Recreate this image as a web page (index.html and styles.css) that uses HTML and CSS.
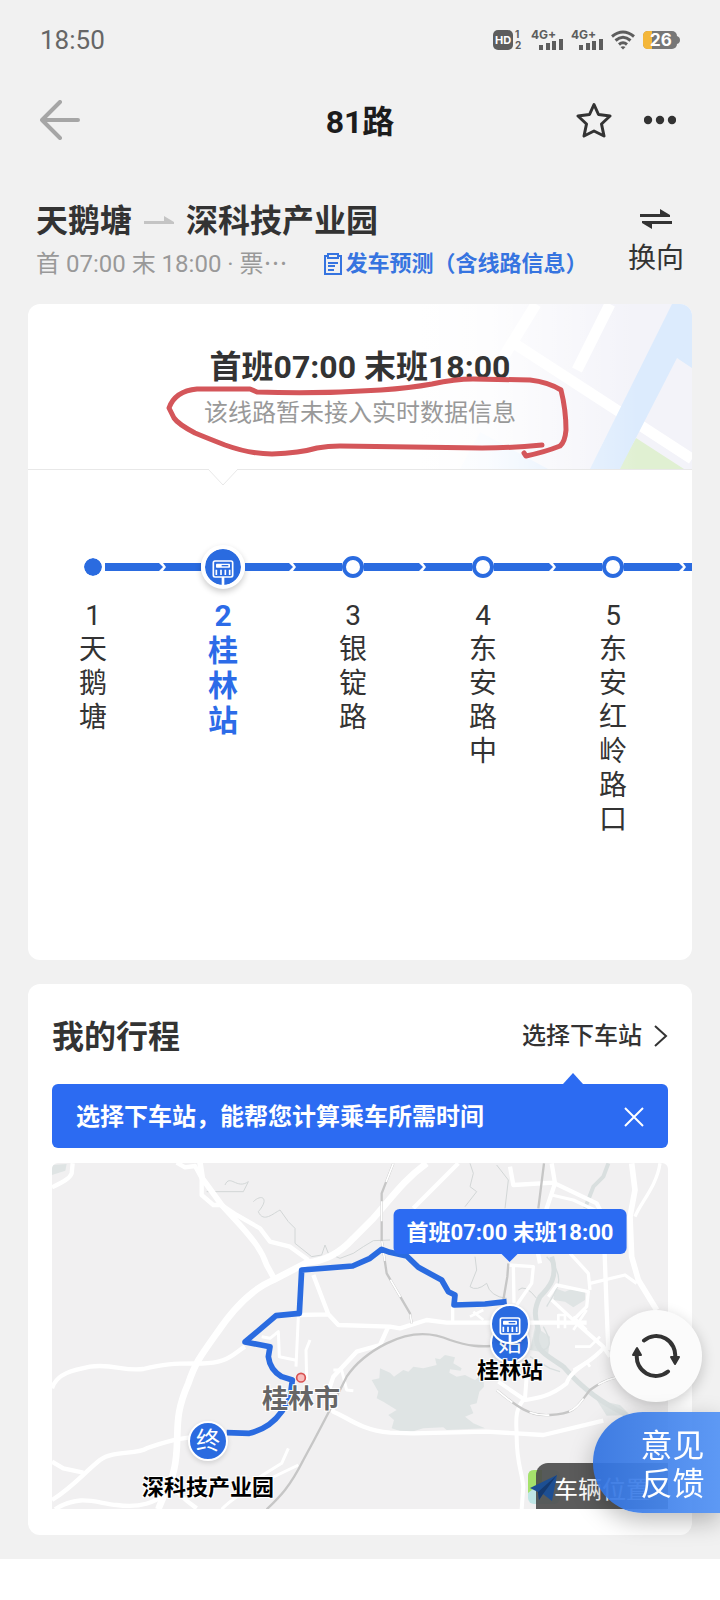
FILE: index.html
```html
<!DOCTYPE html>
<html lang="zh-CN">
<head>
  <meta charset="UTF-8">
  <meta name="viewport" content="width=device-width,initial-scale=1.0">
  <title>81路</title>
  <link rel="stylesheet" href="styles.css">
</head>
<body>
  <svg class="sprite" aria-hidden="true">
    <symbol id="stop-sign" viewBox="0 0 108 108">
      <rect x="25" y="36" width="58" height="48" rx="5" fill="none" stroke="#fff" stroke-width="5"/>
      <rect x="33" y="44" width="42" height="12" rx="2" fill="#fff"/>
      <path d="M50 50h20" stroke="#2a6be0" stroke-width="4"/>
      <path d="M34 62v16M48 62v16M61 62v16M74 62v16" stroke="#fff" stroke-width="5"/>
      <path d="M54 84v24" stroke="#fff" stroke-width="8"/>
    </symbol>
    <symbol id="chevron" viewBox="0 0 10 8">
      <path d="M0 0h1l4 4-4 4H0z" fill="#2a6be0"/>
      <path d="M10 0H5l3 4-3 4h5z" fill="#2a6be0"/>
    </symbol>
  </svg>

  <div class="app">
    <div class="status">
      <span class="time">18:50</span>
      <div class="status-icons">
        <svg width="30" height="24" viewBox="0 0 30 24">
          <rect x="0" y="2" width="20" height="20" rx="5" fill="#5d5d5d"/>
          <text x="2" y="16" font-size="11" font-weight="700" fill="#fff">HD</text>
          <text x="22" y="10" font-size="10" font-weight="700" fill="#5d5d5d">1</text>
          <text x="22" y="21" font-size="10" font-weight="700" fill="#5d5d5d">2</text>
        </svg>
        <svg width="32" height="24" viewBox="0 0 32 24">
          <text x="0" y="11" font-size="12" font-weight="700" fill="#5d5d5d">4G+</text>
          <path d="M10 22v-5M17 22v-7M23 22v-9M30 22v-11" stroke="#5d5d5d" stroke-width="4"/>
        </svg>
        <svg width="32" height="24" viewBox="0 0 32 24">
          <text x="0" y="11" font-size="12" font-weight="700" fill="#5d5d5d">4G+</text>
          <path d="M10 22v-5M17 22v-7M23 22v-9M30 22v-11" stroke="#5d5d5d" stroke-width="4"/>
        </svg>
        <svg width="24" height="20" viewBox="0 0 24 20" fill="none" stroke="#5d5d5d" stroke-width="3">
          <path d="M1 6.500Q12-2.500 23 6.500M4.500 10.500Q12 4 19.500 10.500M8 14.500Q12 11 16 14.500"/>
          <path d="M9.500 17Q12 15.500 14.500 17L12 19.500z" fill="#5d5d5d" stroke="none"/>
        </svg>
        <svg width="37" height="20" viewBox="0 0 37 20">
          <rect x="0" y="1" width="34" height="18" rx="5" fill="#777"/>
          <path d="M9 1H5Q0 1 0 6v8q0 5 5 5h4z" fill="#f4b73a"/>
          <path d="M34 6q3 1 3 4t-3 4z" fill="#777"/>
          <text x="7" y="16" font-size="17" font-weight="700" fill="#fff">26</text>
        </svg>
      </div>
    </div>

    <header class="nav">
      <button class="icon-btn" aria-label="返回">
        <svg width="40" height="40" viewBox="0 0 40 40" fill="none" stroke="#a6a6a6" stroke-width="4" stroke-linecap="round" stroke-linejoin="round">
          <path d="M20 2L2 20l18 18M2 20h36"/>
        </svg>
      </button>
      <h1>81路</h1>
      <div class="nav-actions">
        <button class="icon-btn" aria-label="收藏">
          <svg width="36" height="36" viewBox="0 0 36 36" fill="none" stroke="#333" stroke-width="3" stroke-linejoin="round">
            <path d="M18 2.500L22.500 12.500 34 14l-8.500 8L28 34 18 29 8 34l2.500-12L2 14l11.500-1.500z"/>
          </svg>
        </button>
        <button class="icon-btn" aria-label="更多">
          <svg width="32" height="36" viewBox="0 0 32 36" fill="#333">
            <circle cx="4" cy="18" r="4.200"/><circle cx="16" cy="18" r="4.200"/><circle cx="28" cy="18" r="4.200"/>
          </svg>
        </button>
      </div>
    </header>

    <section class="route">
      <div class="route-info">
        <h2>
          天鹅塘
          <svg width="30" height="10" viewBox="0 0 30 10"><path d="M0 5h20V0l10 6v2H0z" fill="#c4c4c4"/></svg>
          深科技产业园
        </h2>
        <div class="route-meta">
          <span>首 07:00 末 18:00 · 票⋯</span>
          <a href="#">
            <svg width="18" height="22" viewBox="0 0 18 22" fill="none" stroke="#3674e0" stroke-width="2">
              <path d="M4 3H1v18h16V3h-3M4 1h10v4H4zM4 10h10M4 13h7M4 17h6"/>
            </svg>发车预测（含线路信息）</a>
        </div>
      </div>
      <button class="swap">
        <svg width="32" height="20" viewBox="0 0 32 20" fill="#333">
          <path d="M0 5h20V0l10 6v2H0zM32 12H2v2l10 6v-5h20z"/>
        </svg>
        换向
      </button>
    </section>

    <section class="card line-card">
      <div class="banner">
        <svg class="banner-map" width="272" height="165" viewBox="0 0 272 165">
          <defs>
            <linearGradient id="fade">
              <stop offset="0" stop-color="#fff"/>
              <stop offset="0.250" stop-color="#fff" stop-opacity="0.850"/>
              <stop offset="0.800" stop-color="#fff" stop-opacity="0"/>
            </linearGradient>
          </defs>
          <rect width="272" height="165" fill="#f3f3f9"/>
          <path d="M60 128L128 165H40z" fill="#dcebfd"/>
          <path d="M116 0L84 52M190 0L157 66M95 40L272 155" stroke="#fff" stroke-width="11"/>
          <path d="M216 134L264 165H198z" fill="#e0f0d2"/>
          <path d="M252 0h20v64l-15-10-57 111h-30z" fill="#dcebfd"/>
          <path d="M272 33l-4-2-8 20 12 9z" fill="#dcebfd"/>
          <rect width="272" height="165" fill="url(#fade)"/>
        </svg>
        <div class="banner-text">
          <h3>首班07:00 末班18:00</h3>
          <p>该线路暂未接入实时数据信息</p>
          <svg class="scribble" width="420" height="100" viewBox="150 370 420 100" fill="none" stroke="#d4565a" stroke-width="5" stroke-linecap="round" stroke-linejoin="round">
            <path d="M542 445Q510 448 482 448L340 446Q328 446 317 448Q300 453 272 454Q250 454 225 445Q207 438 195 433Q178 424 174 418L169 408Q175 391 197 389L250 389L257 392Q321 394 381 390Q410 388 432 384Q455 379 473 379L530 380Q548 382 561 390Q566 410 566 430Q565 442 560 446Q545 452 526 456L524 453"/>
          </svg>
        </div>
        <svg class="notch" width="30" height="17" viewBox="0 0 30 17">
          <path d="M0 0L15 16 30 0" fill="#fff" stroke="#e8e8e8"/>
        </svg>
      </div>

      <ol class="stations">
        <li class="station first">
          <div class="track"><i></i><span class="node"></span><i class="line"></i></div>
          <span class="num">1</span>
          <span class="name">天鹅塘</span>
        </li>
        <li class="station active">
          <div class="track"><i class="line arrow"><svg width="10" height="8"><use href="#chevron"/></svg></i><span class="node"><svg width="36" height="36"><use href="#stop-sign"/></svg></span><i class="line"></i></div>
          <span class="num">2</span>
          <span class="name">桂林站</span>
        </li>
        <li class="station">
          <div class="track"><i class="line arrow"><svg width="10" height="8"><use href="#chevron"/></svg></i><span class="node"></span><i class="line"></i></div>
          <span class="num">3</span>
          <span class="name">银锭路</span>
        </li>
        <li class="station">
          <div class="track"><i class="line arrow"><svg width="10" height="8"><use href="#chevron"/></svg></i><span class="node"></span><i class="line"></i></div>
          <span class="num">4</span>
          <span class="name">东安路中</span>
        </li>
        <li class="station">
          <div class="track"><i class="line arrow"><svg width="10" height="8"><use href="#chevron"/></svg></i><span class="node"></span><i class="line"></i></div>
          <span class="num">5</span>
          <span class="name">东安红岭路口</span>
        </li>
        <li class="station" aria-hidden="true">
          <div class="track"><i class="line arrow"><svg width="10" height="8"><use href="#chevron"/></svg></i><span class="node"></span><i class="line"></i></div>
        </li>
      </ol>
    </section>

    <section class="card trip-card">
      <div class="trip-head">
        <h2>我的行程</h2>
        <a href="#">选择下车站
          <svg width="14" height="22" viewBox="0 0 14 22" fill="none" stroke="#333" stroke-width="2"><path d="M1 1l11 10L1 21"/></svg>
        </a>
      </div>
      <div class="tip">
        <span>选择下车站，能帮您计算乘车所需时间</span>
        <button class="icon-btn" aria-label="关闭">
          <svg width="20" height="20" viewBox="0 0 20 20" stroke="#fff" stroke-width="2"><path d="M1 1l18 18M19 1L1 19"/></svg>
        </button>
      </div>

      <div class="map">
        <svg class="map-bg" viewBox="36 39 1848 1038" preserveAspectRatio="xMidYMid slice" fill="none" stroke-linejoin="round">
          <!-- water -->
          <g fill="#dfe4e4">
            <path d="M995 690L1018 685 1020 655 1050 668 1062 680 1090 660 1105 665 1120 650 1150 655 1190 645 1185 625 1200 628 1215 615 1245 622 1240 640 1265 655 1262 662 1230 658 1228 668 1250 680 1275 675 1305 690 1330 670 1332 710 1318 725 1310 760 1290 765 1300 790 1275 800 1300 820 1335 835 1220 840 1210 832 1150 835 1100 850 1055 835 1062 810 1045 795 1070 780 1030 755 1010 745 1015 725z"/>
            <path d="M1545 415L1575 425 1600 415 1635 425V450L1600 472 1575 455 1540 450z"/>
            <path d="M1485 530L1530 560 1525 610 1470 600z"/>
            <path d="M1670 750L1740 765 1770 795 1700 797z"/>
            <path d="M36 45L80 42 76 62 36 75z"/>
          </g>
          <g stroke="#d9dfdf">
            <path d="M1705 40L1690 80 1660 110 1635 175" stroke-width="12"/>
            <path d="M1535 320C1555 380 1530 410 1500 440C1475 490 1490 510 1495 540C1470 600 1530 620 1570 650C1630 720 1690 760 1760 795" stroke-width="15"/>
            <path d="M1520 320C1590 390 1540 430 1520 470M1510 530Q1550 600 1500 600M1470 620L1530 655 1560 665" stroke-width="4"/>
          </g>
          <g stroke="#d2d6d6" stroke-width="3">
            <path d="M555 105C570 70 590 120 625 95L610 125 555 125 500 125M640 155C665 130 690 145 655 185C670 220 700 190 720 180L745 215 765 235 765 280 815 320 845 315 855 285 865 310 900 325 940 310 970 290 1000 272 1050 270"/>
            <path d="M1290 40L1300 70 1290 110 1310 125 1275 170M1370 45L1405 90 1395 175M1305 320L1310 360 1290 410Q1310 425 1340 400Q1350 440 1400 445M1435 420Q1455 400 1490 445"/>
          </g>

          <!-- roads -->
          <g stroke="#fff" stroke-width="20">
            <path d="M1160 40C1090 90 1050 150 1000 205L940 265Q880 332 800 338L700 390C630 420 570 490 530 550C480 620 465 640 445 700C405 790 415 830 410 900C405 990 380 1010 355 1078"/>
            <path d="M480 38L487 85 545 165 600 225C640 270 665 300 680 345L705 390M1775 40L1785 120 1770 200 1775 320 1795 390 1850 480" stroke-width="17"/>
          </g>
          <g stroke="#fff" stroke-width="13">
            <path d="M36 112C70 95 90 85 95 70L98 40M410 38L435 52 465 48 485 85V135L520 165H545L590 195 660 235 690 275 750 290 805 330"/>
            <path d="M36 715C50 670 100 660 150 650C220 640 250 665 310 657C370 642 400 640 470 640C560 645 580 610 615 590"/>
            <path d="M36 1050C100 1010 130 970 180 930C220 900 290 915 320 895Q360 880 410 868L450 862M36 935L70 955 130 968M45 1078C120 1030 170 1060 230 1065C300 1075 340 1060 400 1020M400 1010Q420 1040 470 1075"/>
            <path d="M545 1078C590 1030 640 1020 660 980L725 940 745 895M640 1010L775 945" stroke-width="9"/>
            <path d="M780 495L865 493 820 375M865 493L895 525 1050 530 1080 535 1160 510 1220 518H1640M1045 530L1020 585 950 605 880 680 860 740 880 785C920 800 960 840 1050 848L1120 850 1340 845 1510 855 1690 812"/>
            <path d="M775 500L768 650M665 560L690 565 715 545 718 620 765 630M810 570L798 600 800 690M880 660L905 660 920 720 940 722" stroke-width="9"/>
            <path d="M1255 40L1120 175M1410 50L1420 105 1540 98 1670 160 1690 200 1700 480 1705 600M1535 40L1545 100 1520 175 1490 290 1500 340"/>
            <path d="M1860 40C1850 110 1800 160 1785 200M1535 135L1600 150 1675 185M1405 345L1480 350 1475 400 1430 465M1420 345L1422 460M1525 440L1550 405 1645 425 1640 470 1600 510 1535 450M1590 310L1645 370 1650 420M1650 400L1755 375 1790 400M1238 470V515" stroke-width="10"/>
            <path d="M1610 520L1690 590 1710 620M1690 595C1650 640 1590 660 1580 700C1530 740 1490 745 1455 750L1375 695M1460 680L1455 745C1420 780 1430 820 1430 860C1430 940 1445 960 1450 1010L1445 1078" stroke-width="12"/>
            <path d="M1290 500L1330 480M1300 485L1330 510M1555 535V495H1575V535M1605 590L1650 590 1680 560M1600 660L1640 635 1650 650M1600 500L1640 540M1600 540L1640 480" stroke-width="8"/>
          </g>

          <!-- railways -->
          <g stroke="#c6c6c6">
            <path d="M680 1078C720 1040 750 1010 790 930C850 820 890 740 920 680Q960 620 1040 580Q1140 530 1230 570C1290 590 1320 590 1355 588M1512 40L1495 175M1405 340L1402 380 1390 450" stroke-width="7"/>
            <path d="M1060 40L1025 130V270L1040 370 1110 490 1115 520M1370 720C1430 770 1470 800 1530 795C1610 790 1610 770 1650 720Q1690 690 1730 682" stroke-width="7"/>
            <path d="M1060 40L1025 130V270L1040 370 1110 490 1115 520M1370 720C1430 770 1470 800 1530 795C1610 790 1610 770 1650 720Q1690 690 1730 682" stroke="#fff" stroke-width="5" stroke-dasharray="60 60"/>
          </g>

          <path d="M560 848L628 850Q690 835 725 785L750 745 757 690 725 680Q690 660 685 620L690 590 615 576 708 497 778 490 785 360 938 348 990 325 1025 298 1050 307 1100 318 1135 352 1205 390 1225 425 1245 435 1242 465 1335 462 1400 455" stroke="#2a6be0" stroke-width="17"/>
          <circle cx="783" cy="683" r="13" fill="#f8bdbd" stroke="#d95353" stroke-width="5"/>
        </svg>

        <span class="label city">桂林市</span>
        <span class="pin end">终</span>
        <span class="label end-label">深科技产业园</span>
        <span class="pin start">始</span>
        <span class="pin near"><svg width="36" height="36"><use href="#stop-sign"/></svg></span>
        <span class="label near-label">桂林站</span>
        <div class="bubble">首班07:00 末班18:00</div>
        <svg class="map-logo" width="36" height="36" viewBox="0 0 36 36">
          <rect x="2" y="1" width="32" height="34" rx="6" fill="#bfe6e6"/>
          <path d="M8 1h8v12L2 24V7q0-6 6-6z" fill="#a5e26b"/>
        </svg>
        <button class="vehicle">车辆位置</button>
        <svg class="map-arrow" width="28" height="28" viewBox="0 0 28 28">
          <path d="M0 14L27 1 22 27 13 20 9 26 8 18z" fill="#1d4f93"/>
          <path d="M8 18L27 1 13 20 9 26z" fill="#153a70"/>
        </svg>
      </div>
    </section>

    <footer class="more"><b>检查</b> 附近站点线路信息</footer>
  </div>

  <button class="refresh" aria-label="刷新">
    <svg width="50" height="44" viewBox="0 0 50 44" fill="none" stroke="#333" stroke-width="4" stroke-linecap="round">
      <path d="M13 6.500A19 19 0 0 1 44 24M37 37.500A19 19 0 0 1 6 20"/>
      <path d="M40 23h8l-4 7zM2 21h8l-4-7z" fill="#333" stroke-width="2" stroke-linejoin="round"/>
    </svg>
  </button>
  <button class="feedback">意见<br>反馈</button>
</body>
</html>
```

FILE: styles.css
```css
* {
  box-sizing: border-box;
}
body {
  margin: 0;
  font-family: Roboto, "Noto Sans CJK SC", sans-serif;
  background: #f1f1f1;
  color: #333;
}
h1, h2, h3, p, ol {
  margin: 0;
  padding: 0;
}
button {
  font: inherit;
  color: inherit;
  border: 0;
  padding: 0;
  background: none;
  cursor: pointer;
}
a {
  text-decoration: none;
  color: inherit;
}
svg {
  display: block;
  flex: none;
}
.sprite {
  position: absolute;
  width: 0;
  height: 0;
}
.app {
  display: flex;
  flex-direction: column;
  height: 100vh;
  min-height: 1000px;
  overflow: hidden;
}
.app > * {
  flex: none;
}

/* status bar + nav */
.status {
  display: flex;
  align-items: center;
  justify-content: space-between;
  height: 80px;
  padding: 0 40px;
}
.time {
  font-size: 26px;
  color: #666;
}
.status-icons {
  display: flex;
  align-items: center;
  gap: 8px;
}
.status-icons svg {
  font-family: Inter, sans-serif;
}
.nav {
  display: grid;
  grid-template-columns: 1fr auto 1fr;
  align-items: center;
  height: 80px;
  padding: 0 40px;
}
.nav h1 {
  padding-top: 4px;
  font-size: 32px;
  line-height: 48px;
  font-weight: 700;
  color: #1c1c1c;
}
.nav-actions {
  display: flex;
  justify-content: flex-end;
  gap: 32px;
  padding-right: 4px;
}
.icon-btn {
  display: flex;
  justify-self: start;
}

/* route header */
.route {
  display: flex;
  justify-content: space-between;
  height: 144px;
  padding: 37px 36px 0;
}
.route h2 {
  display: flex;
  align-items: center;
  gap: 12px;
  font-size: 32px;
  line-height: 48px;
}
.route-meta {
  display: flex;
  align-items: center;
  gap: 36px;
  font-size: 24px;
  line-height: 38px;
  color: #999;
}
.route-meta a {
  display: flex;
  align-items: center;
  gap: 4px;
  font-size: 22px;
  font-weight: 700;
  color: #3674e0;
}
.swap {
  display: flex;
  flex-direction: column;
  align-items: center;
  gap: 10px;
  padding-top: 12px;
  font-size: 28px;
  line-height: 40px;
}

.card {
  margin: 0 28px 24px;
  background: #fff;
  border-radius: 12px;
}

/* line card */
.line-card {
  min-height: 656px;
  overflow: hidden;
}
.banner {
  position: relative;
  height: 166px;
  padding-top: 39px;
  border-bottom: 1px solid #e8e8e8;
}
.banner-map {
  position: absolute;
  top: 0;
  right: 0;
}
.banner-text {
  position: relative;
  width: 420px;
  margin: 0 auto;
  text-align: center;
}
.banner h3 {
  font-size: 32px;
  line-height: 48px;
}
.banner p {
  font-size: 24px;
  line-height: 44px;
  color: #999;
}
.scribble {
  position: absolute;
  left: 0;
  top: 27px;
}
.notch {
  position: absolute;
  left: 180px;
  top: 165px;
}
.stations {
  display: flex;
  list-style: none;
  padding-top: 75px;
}
.station {
  flex: 0 0 130px;
  display: flex;
  flex-direction: column;
  align-items: center;
  font-size: 28px;
  line-height: 34px;
}
.track {
  display: grid;
  grid-template-columns: 1fr auto 1fr;
  align-items: center;
  width: 100%;
  height: 44px;
  margin-bottom: 10px;
}
.line {
  height: 8px;
  background: #2a6be0;
}
.arrow svg {
  background: #fff;
}
.node {
  width: 22px;
  height: 22px;
  border: 4px solid #2a6be0;
  border-radius: 50%;
  background: #fff;
}
.first .node {
  border: 2px solid #fff;
  background: #2a6be0;
  background-clip: padding-box;
  margin: 0 1px;
}
.active .node {
  width: 44px;
  height: 44px;
  border-color: #fff;
  background: #2a6be0;
  background-clip: padding-box;
  box-shadow: 0 3px 6px #0003;
}
.name {
  width: 30px;
  text-align: center;
}
.active .num,
.active .name {
  color: #2c6be8;
  font-size: 30px;
  font-weight: 700;
}
.active .name {
  line-height: 35px;
}

/* trip card */
.trip-card {
  padding: 24px 24px 26px;
}
.trip-head {
  display: flex;
  align-items: center;
  justify-content: space-between;
  height: 56px;
  margin-bottom: 20px;
}
.trip-head h2 {
  padding-top: 2px;
  font-size: 32px;
  line-height: 48px;
}
.trip-head a {
  display: flex;
  align-items: center;
  gap: 12px;
  font-size: 24px;
  line-height: 36px;
  font-weight: 500;
}
.tip {
  position: relative;
  display: flex;
  align-items: center;
  justify-content: space-between;
  height: 64px;
  margin-bottom: 15px;
  padding: 2px 24px 0;
  border-radius: 6px;
  background: #2c6bf2;
  color: #fff;
  font-size: 24px;
  line-height: 36px;
  font-weight: 700;
}
.tip::before {
  content: "";
  position: absolute;
  right: 85px;
  top: -11px;
  border: 10px solid transparent;
  border-top: 0;
  border-bottom: 11px solid #2c6bf2;
}

/* map */
.map {
  position: relative;
  height: 346px;
  border-radius: 6px 6px 0 0;
  background: #f1f0f1;
  overflow: hidden;
}
.map-bg {
  width: 100%;
  height: 100%;
}
.pin {
  position: absolute;
  transform: translate(-50%, -50%);
  display: flex;
  align-items: center;
  justify-content: center;
  width: 40px;
  height: 40px;
  border: 2px solid #fff;
  border-radius: 50%;
  background: #2a6be0;
  color: #fff;
  font-size: 24px;
  line-height: 36px;
  box-shadow: 0 2px 5px #0002;
}
.end {
  left: 156px;
  top: 278px;
}
.start {
  left: 458px;
  top: 180px;
}
.near {
  left: 458px;
  top: 161px;
}
.label {
  position: absolute;
  transform: translate(-50%, -50%);
  font-size: 22px;
  font-weight: 700;
  line-height: 32px;
  color: #000;
  white-space: nowrap;
  text-shadow: 1px 1px #fff, -1px -1px #fff, 1px -1px #fff, -1px 1px #fff;
}
.city {
  left: 249px;
  top: 236px;
  font-size: 26px;
  color: #666;
}
.end-label {
  left: 156px;
  top: 325px;
}
.near-label {
  left: 458px;
  top: 208px;
}
.bubble {
  position: absolute;
  left: 458px;
  top: 46px;
  transform: translateX(-50%);
  height: 45px;
  padding: 0 13px;
  border-radius: 6px;
  background: #2c6bf2;
  color: #fff;
  font-size: 22px;
  font-weight: 700;
  line-height: 48px;
  white-space: nowrap;
}
.bubble::after {
  content: "";
  position: absolute;
  left: 50%;
  top: 100%;
  margin-left: -8px;
  border: 8px solid transparent;
  border-bottom: 0;
  border-top-color: #2c6bf2;
}
.map-logo {
  position: absolute;
  right: 106px;
  bottom: 4px;
}
.vehicle {
  position: absolute;
  right: 0;
  bottom: 0;
  width: 132px;
  height: 46px;
  padding: 2px 0 0 18px;
  border-radius: 12px 0 0 0;
  background: #4a4a4ae6;
  color: #fff;
  font-size: 24px;
  text-align: left;
}
.map-arrow {
  position: absolute;
  right: 110px;
  bottom: 7px;
}

.more {
  flex: 1 0 0;
  height: 0;
  min-height: 0;
  padding: 38px 20px 0;
  background: #fff;
  font-size: 32px;
  line-height: 40px;
  white-space: nowrap;
  overflow: hidden;
}

/* floating buttons */
.refresh {
  position: fixed;
  right: 18px;
  bottom: 198px;
  display: flex;
  align-items: center;
  justify-content: center;
  width: 92px;
  height: 92px;
  border-radius: 50%;
  background: #fbfbfb;
  box-shadow: 0 4px 14px #0003;
}
.feedback {
  position: fixed;
  right: 0;
  bottom: 87px;
  width: 127px;
  height: 101px;
  padding: 5px 0 0 32px;
  border-radius: 50px 0 0 50px;
  background: linear-gradient(90deg, #3273e0ee, #5393f5ee);
  box-shadow: 0 8px 24px #0004;
  color: #fff;
  font-size: 32px;
  line-height: 38px;
}
```
